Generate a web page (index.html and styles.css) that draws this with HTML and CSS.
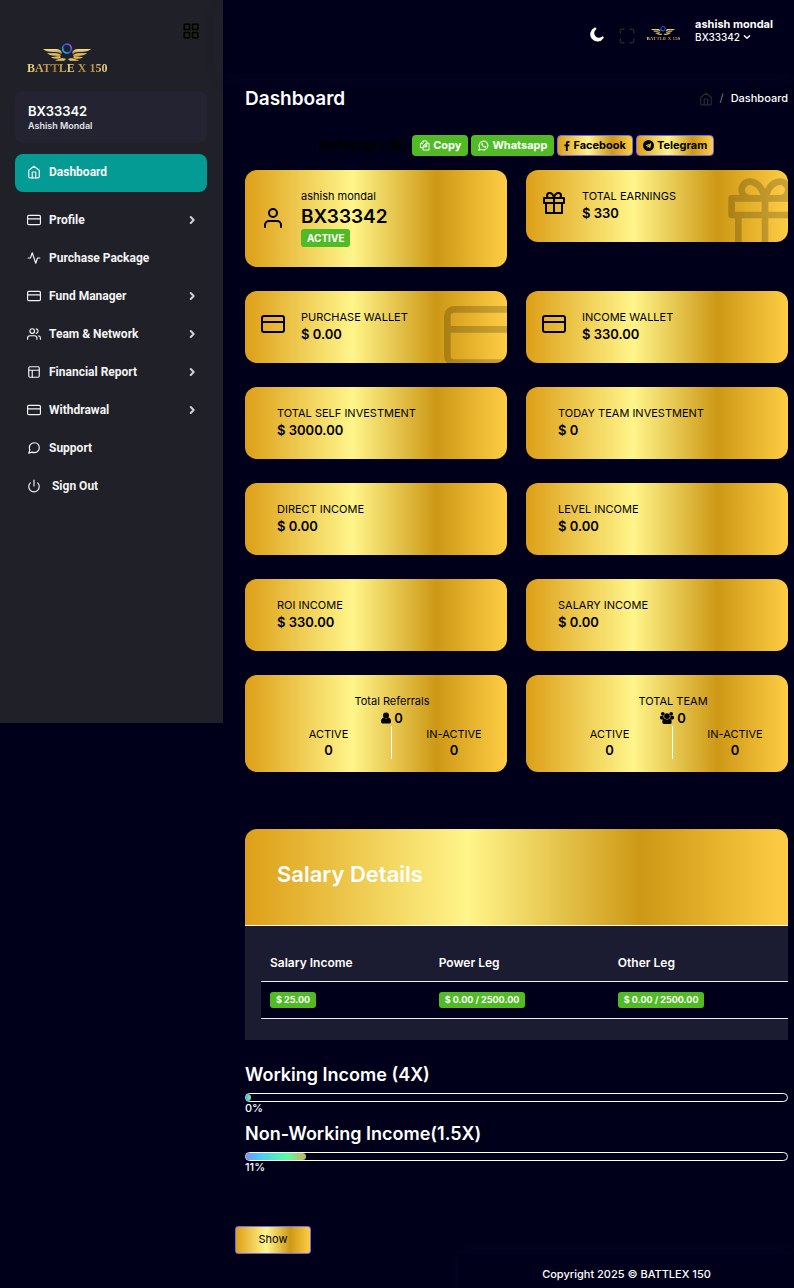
FILE: index.html
```html
<!DOCTYPE html>
<html lang="en">
<head>
<meta charset="utf-8">
<meta name="viewport" content="width=device-width, initial-scale=1">
<title>Dashboard - BATTLEX 150</title>
<link rel="stylesheet" href="styles.css">
</head>
<body>
<svg class="sprite" aria-hidden="true">
  <defs>
    <linearGradient id="wing" x1="0" x2="0" y1="0" y2="1">
      <stop offset="0" stop-color="#f8e69a"/><stop offset="1" stop-color="#b07a10"/>
    </linearGradient>
    <linearGradient id="ring" x1="0" x2="1" y1="1" y2="0">
      <stop offset="0" stop-color="#17c9f5"/><stop offset=".55" stop-color="#1450e0"/><stop offset="1" stop-color="#c850e8"/>
    </linearGradient>
  </defs>
  <symbol id="logo" viewBox="15 0 48 18">
    <g fill="url(#wing)">
      <path d="M15 6h13c3 0 5 1 6 4l-1 1c-2-2-5-2-8-2-5 0-8-1-10-3z"/>
      <path d="M19 10c5 1 9-1 14 2l-1 2c-4-2-9 0-13-4z"/>
      <path d="M23 14c4 0 7-1 10 0l-2 2c-3 0-6 0-8-2z"/>
      <path d="M27 17c4 0 6-3 11-1-2 3-8 4-11 1z"/>
      <path d="M63 6H50c-3 0-5 1-6 4l1 1c2-2 5-2 8-2 5 0 8-1 10-3z"/>
      <path d="M59 10c-5 1-9-1-14 2l1 2c4-2 9 0 13-4z"/>
      <path d="M55 14c-4 0-7-1-10 0l2 2c3 0 6 0 8-2z"/>
      <path d="M51 17c-4 0-6-3-11-1 2 3 8 4 11 1z"/>
    </g>
    <circle cx="39" cy="5.500" r="4.300" fill="none" stroke="url(#ring)" stroke-width="1.800"/>
  </symbol>
  <symbol id="i-grid" viewBox="0 0 24 24"><path d="M3 3h7v7H3zM14 3h7v7h-7zM14 14h7v7h-7zM3 14h7v7H3z"/></symbol>
  <symbol id="i-home" viewBox="0 0 24 24"><path d="M3 9l9-7 9 7v11a2 2 0 0 1-2 2H5a2 2 0 0 1-2-2z"/><path d="M9 22V12h6v10"/></symbol>
  <symbol id="i-card" viewBox="0 0 24 24"><rect x="1" y="4" width="22" height="16" rx="2"/><path d="M1 10h22"/></symbol>
  <symbol id="i-activity" viewBox="0 0 24 24"><path d="M22 12h-4l-3 9L9 3l-3 9H2"/></symbol>
  <symbol id="i-users" viewBox="0 0 24 24"><path d="M17 21v-2a4 4 0 0 0-4-4H5a4 4 0 0 0-4 4v2"/><circle cx="9" cy="7" r="4"/><path d="M23 21v-2a4 4 0 0 0-3-3.87M16 3.13a4 4 0 0 1 0 7.75"/></symbol>
  <symbol id="i-layout" viewBox="0 0 24 24"><rect x="3" y="3" width="18" height="18" rx="2"/><path d="M3 9h18M9 21V9"/></symbol>
  <symbol id="i-message" viewBox="0 0 24 24"><path d="M21 11.5a8.38 8.38 0 0 1-.9 3.8 8.5 8.5 0 0 1-7.6 4.7 8.38 8.38 0 0 1-3.8-.9L3 21l1.900-5.700a8.380 8.380 0 0 1-.900-3.800 8.500 8.500 0 0 1 4.700-7.600 8.380 8.380 0 0 1 3.800-.900h.500a8.480 8.480 0 0 1 8 8z"/></symbol>
  <symbol id="i-power" viewBox="0 0 24 24"><path d="M18.36 6.64a9 9 0 1 1-12.73 0M12 2v10"/></symbol>
  <symbol id="i-chevron" viewBox="0 0 24 24"><path d="M9 5l7 7-7 7"/></symbol>
  <symbol id="i-down" viewBox="0 0 24 24"><path d="M4 8l8 8 8-8"/></symbol>
  <symbol id="i-max" viewBox="0 0 24 24"><path d="M8 3H5a2 2 0 0 0-2 2v3m18 0V5a2 2 0 0 0-2-2h-3m0 18h3a2 2 0 0 0 2-2v-3M3 16v3a2 2 0 0 0 2 2h3"/></symbol>
  <symbol id="i-user" viewBox="0 0 24 24"><path d="M20 21v-2a4 4 0 0 0-4-4H8a4 4 0 0 0-4 4v2"/><circle cx="12" cy="7" r="4"/></symbol>
  <symbol id="i-gift" viewBox="0 0 24 24"><path d="M20 12v10H4V12M2 7h20v5H2zM12 22V7M12 7H7.500a2.500 2.500 0 0 1 0-5C11 2 12 7 12 7zM12 7h4.500a2.500 2.500 0 0 0 0-5C13 2 12 7 12 7z"/></symbol>
  <symbol id="f-moon" viewBox="0 0 14 14"><path d="M6.300 1.400A5.300 5.300 0 1 0 12.700 9.200 A5 5 0 0 1 6.300 1.400z" fill="none" stroke="currentColor" stroke-width="2" stroke-linejoin="round"/></symbol>
  <symbol id="f-copy" viewBox="0 0 24 24"><path d="M9 6.500V2h8v13h-6M9 2L3 8v9h6M3 8h6M15 7h7v15H9v-9l6-6v6H9" fill="none" stroke="currentColor" stroke-width="2"/></symbol>
  <symbol id="f-whatsapp" viewBox="0 0 24 24"><path d="M2 22l1.500-5.200A9.700 9.700 0 1 1 7.200 20.500z" fill="none" stroke="currentColor" stroke-width="2.200"/><path d="M8.500 6.500c-1.500 1-1.500 3 .2 5.500 2 3 4.800 4.800 7 4.800 1.500 0 2.500-1.200 2.300-2.500l-2.700-1.400-1.300 1.500c-1.600-.6-2.900-1.900-3.700-3.300l1-1.400-1.200-3z"/></symbol>
  <symbol id="f-facebook" viewBox="0 0 14 24"><path d="M13 .2v3.800h-2.200C9 4 8.700 4.800 8.700 6v2.600h4.200l-.6 4.200H8.700V24H4.300V12.800H.6V8.600h3.700V5.500C4.300 1.900 6.500 0 9.800 0c1.500 0 2.800.1 3.200.2z"/></symbol>
  <symbol id="f-telegram" viewBox="0 0 24 24"><path fill-rule="evenodd" d="M12 0a12 12 0 1 0 0 24 12 12 0 0 0 0-24zm5.900 7.300l-2 9.500c-.1.700-.5.900-1.100.5l-3-2.300-1.500 1.500c-.4.400-.7.200-.8-.4L9 13.200l-3-.9c-.7-.2-.7-.6.100-.9l11-4.300c.6-.2 1 .1.800.200zM9.700 12.800l.2 1.600 5-4.900z"/></symbol>
  <symbol id="f-user" viewBox="0 0 20 24"><circle cx="10" cy="7" r="6"/><path d="M5 11C1 12 0 16 0 19c0 3 2 4 4 4h12c2 0 4-1 4-4 0-3-1-7-5-8-3 3-7 3-10 0z"/></symbol>
  <symbol id="f-users" viewBox="0 0 30 26"><circle cx="6" cy="4" r="4"/><circle cx="24" cy="4" r="4"/><circle cx="15" cy="9" r="6"/><path d="M2 8C0 9 0 11 0 13c0 2 1 3 3 3h4c1-1 1-1 2-2-2-2-2-4-1-6-2 1-4 1-6 0zM28 8c2 1 2 3 2 5 0 2-1 3-3 3h-4c-1-1-1-1-2-2 2-2 2-4 1-6 2 1 4 1 6 0zM10 14c-4 0-5 4-5 7 0 3 1 5 4 5h12c3 0 4-2 4-5 0-3-1-7-5-7-3 3-7 3-10 0z"/></symbol>
</svg>

<div class="page">
  <aside class="sidebar">
    <div class="toggle-row"><button class="icon-button" type="button" aria-label="Toggle sidebar"><svg class="line icon-18"><use href="#i-grid"/></svg></button></div>
    <a class="brand" href="#"><svg class="wings"><use href="#logo"/></svg><span>BATTLE X 150</span></a>
    <div class="member"><strong>BX33342</strong><span>Ashish Mondal</span></div>
    <nav>
      <ul class="menu">
        <li><a class="active" href="#"><svg class="line icon-14"><use href="#i-home"/></svg>Dashboard</a></li>
        <li><a href="#"><svg class="line icon-14"><use href="#i-card"/></svg>Profile<svg class="line arrow"><use href="#i-chevron"/></svg></a></li>
        <li><a href="#"><svg class="line icon-14"><use href="#i-activity"/></svg>Purchase Package</a></li>
        <li><a href="#"><svg class="line icon-14"><use href="#i-card"/></svg>Fund Manager<svg class="line arrow"><use href="#i-chevron"/></svg></a></li>
        <li><a href="#"><svg class="line icon-14"><use href="#i-users"/></svg>Team &amp; Network<svg class="line arrow"><use href="#i-chevron"/></svg></a></li>
        <li><a href="#"><svg class="line icon-14"><use href="#i-layout"/></svg>Financial Report<svg class="line arrow"><use href="#i-chevron"/></svg></a></li>
        <li><a href="#"><svg class="line icon-14"><use href="#i-card"/></svg>Withdrawal<svg class="line arrow"><use href="#i-chevron"/></svg></a></li>
        <li><a href="#"><svg class="line icon-14"><use href="#i-message"/></svg>Support</a></li>
        <li><a href="#"><svg class="line icon-14"><use href="#i-power"/></svg>&nbsp;Sign Out</a></li>
      </ul>
    </nav>
  </aside>

  <div class="main">
    <header class="topbar">
      <button class="icon-button light" type="button" aria-label="Dark mode"><svg class="icon-16"><use href="#f-moon"/></svg></button>
      <button class="icon-button faint" type="button" aria-label="Full screen"><svg class="line icon-18"><use href="#i-max"/></svg></button>
      <div class="brand small"><svg class="wings"><use href="#logo"/></svg><span>BATTLE X 150</span></div>
      <a class="account" href="#"><strong>ashish mondal</strong><span>BX33342 <svg class="line icon-8"><use href="#i-down"/></svg></span></a>
    </header>

    <main class="content">
      <div class="title-row">
        <h1>Dashboard</h1>
        <nav class="crumbs" aria-label="Breadcrumb"><a href="#" aria-label="Home"><svg class="line icon-14"><use href="#i-home"/></svg></a><span class="slash">/</span><span>Dashboard</span></nav>
      </div>

      <div class="share">
        <span class="share-label">Referral URL</span>
        <button class="chip green" type="button"><svg class="icon-11"><use href="#f-copy"/></svg>Copy</button>
        <a class="chip green" href="#"><svg class="icon-11"><use href="#f-whatsapp"/></svg>Whatsapp</a>
        <a class="chip gold" href="#"><svg class="icon-fb"><use href="#f-facebook"/></svg>Facebook</a>
        <a class="chip gold" href="#"><svg class="icon-11"><use href="#f-telegram"/></svg>Telegram</a>
      </div>

      <section class="cards">
        <article class="card with-icon"><svg class="line icon-24 centered"><use href="#i-user"/></svg><div><p>ashish mondal</p><h2>BX33342</h2><span class="badge active-badge">ACTIVE</span></div></article>
        <article class="card with-icon"><svg class="line icon-24"><use href="#i-gift"/></svg><div><p>TOTAL EARNINGS</p><b>$ 330</b></div><svg class="line ghost"><use href="#i-gift"/></svg></article>
        <article class="card with-icon"><svg class="line icon-24"><use href="#i-card"/></svg><div><p>PURCHASE WALLET</p><b>$ 0.00</b></div><svg class="line ghost"><use href="#i-card"/></svg></article>
        <article class="card with-icon"><svg class="line icon-24"><use href="#i-card"/></svg><div><p>INCOME WALLET</p><b>$ 330.00</b></div></article>
        <article class="card"><p>TOTAL SELF INVESTMENT</p><b>$ 3000.00</b></article>
        <article class="card"><p>TODAY TEAM INVESTMENT</p><b>$ 0</b></article>
        <article class="card"><p>DIRECT INCOME</p><b>$ 0.00</b></article>
        <article class="card"><p>LEVEL INCOME</p><b>$ 0.00</b></article>
        <article class="card"><p>ROI INCOME</p><b>$ 330.00</b></article>
        <article class="card"><p>SALARY INCOME</p><b>$ 0.00</b></article>
        <article class="card tally"><p class="tally-title">Total Referrals</p><b><svg class="icon-user"><use href="#f-user"/></svg>0</b><div class="halves"><div><p>ACTIVE</p><b>0</b></div><div><p>IN-ACTIVE</p><b>0</b></div></div></article>
        <article class="card tally"><p class="tally-title">TOTAL TEAM</p><b><svg class="icon-14"><use href="#f-users"/></svg>0</b><div class="halves"><div><p>ACTIVE</p><b>0</b></div><div><p>IN-ACTIVE</p><b>0</b></div></div></article>
      </section>

      <section class="salary">
        <h2>Salary Details</h2>
        <div class="salary-body">
          <table>
            <thead><tr><th scope="col">Salary Income</th><th scope="col">Power Leg</th><th scope="col">Other Leg</th></tr></thead>
            <tbody><tr><td><span class="badge">$ 25.00</span></td><td><span class="badge">$ 0.00 / 2500.00</span></td><td><span class="badge">$ 0.00 / 2500.00</span></td></tr></tbody>
          </table>
        </div>
      </section>

      <section class="limits">
        <h3>Working Income (4X)</h3>
        <div class="bar"><div class="fill" style="width:1%"></div></div>
        <p>0%</p>
        <h3>Non-Working Income(1.5X)</h3>
        <div class="bar"><div class="fill" style="width:11%"></div></div>
        <p>11%</p>
      </section>

      <button class="show" type="button">Show</button>
    </main>
    <footer class="footer">Copyright 2025 © BATTLEX 150</footer>
  </div>
</div>
</body>
</html>
```

FILE: styles.css
```css
:root {
  --gold: linear-gradient(to right, #dd9f17 0%, #fff58a 41%, #cd9815 73%, #ffcd45 100%);
  --green: #51bb25;
  --night: #00001a;
}
* { box-sizing: border-box; }
body { margin: 0; background: var(--night); color: #fff; font: 11px/17px Inter, "Liberation Sans", sans-serif; }
h1, h2, h3, p, ul { margin: 0; padding: 0; }
a { color: inherit; text-decoration: none; }
button { font: inherit; color: inherit; }
svg { display: block; flex: none; fill: currentColor; }
.sprite { position: absolute; width: 0; height: 0; }
.line { fill: none; stroke: currentColor; stroke-width: 2; stroke-linecap: round; stroke-linejoin: round; }
.icon-8 { width: 8px; height: 8px; stroke-width: 4; }
.icon-fb { width: 6px; height: 10px; }
.icon-user { width: 10px; height: 12px; }
.icon-11 { width: 11px; height: 11px; }
.icon-14 { width: 14px; height: 14px; }
.icon-16 { width: 16px; height: 16px; }
.icon-18 { width: 18px; height: 18px; }
.icon-24 { width: 24px; height: 24px; }
.icon-button { padding: 0; border: 0; background: none; color: #000; }
.icon-button.light { color: #fff; }
.icon-button.faint { color: #20242a; }

.page { display: grid; grid-template-columns: 223px minmax(0, 1fr); align-items: start; }

.sidebar { padding: 22px 16px 217px 15px; background: #1f2028; font-family: Roboto, "Liberation Sans", sans-serif; }
.toggle-row { display: flex; justify-content: flex-end; padding-right: 7px; }
.brand { display: flex; flex-direction: column; align-items: center; width: fit-content; margin: 3px 0 16px 12px; }
.brand span { color: transparent; background: linear-gradient(to right, #f5e08a, #a87a35 35%, #efd57c 55%, #a87a35 75%, #f5e08a); background-clip: text; font: bold 12px/14px "Liberation Serif", serif; }
.wings { width: 48px; height: 18px; }
.brand.small { margin: 0; }
.brand.small .wings { width: 24px; height: 9px; }
.brand.small span { font-size: 5px; line-height: 7px; }
.member { display: flex; flex-direction: column; height: 52px; padding: 12px 13px; border-radius: 8px; background: #242332; }
.member strong { font: 600 13px/16px Inter, sans-serif; }
.member span { font: 600 9px/14px Inter, sans-serif; color: #e3e3e8; }
.menu { list-style: none; margin-top: 11px; }
.menu a { display: flex; align-items: center; gap: 8px; height: 38px; padding: 0 10px 2px 12px; border-radius: 8px; color: #f4f4f4; font-size: 12px; font-weight: 700; }
.menu a.active { margin-bottom: 10px; background: #049b94; }
.arrow { width: 10px; height: 10px; margin-left: auto; stroke-width: 5; color: #d0d0d4; }

.topbar { display: flex; align-items: center; justify-content: flex-end; height: 74px; padding: 0 21px 6px 20px; box-shadow: 0 4px 20px rgba(60, 60, 140, .08); }
.topbar .light { margin: 2px 14px 0 0; }
.topbar .faint { margin: 4px 10px 0 0; }
.account { display: flex; flex-direction: column; margin: -8px 0 0 14px; }
.account strong { font: 700 11px/14px Inter, sans-serif; }
.account span { display: flex; align-items: center; gap: 3px; font-size: 10px; line-height: 13px; font-weight: 500; }
.brand.small { padding: 0 1px; }

.content { padding: 12px 6px 0 22px; }
.title-row { display: flex; align-items: center; justify-content: space-between; height: 25px; }
h1 { font-size: 19px; line-height: 25px; font-weight: 600; }
.crumbs { display: flex; align-items: center; gap: 7px; font-size: 11px; font-weight: 500; }
.crumbs a { color: #262b33; }
.crumbs .slash { color: #6a6f78; }
.share { display: flex; justify-content: center; align-items: center; gap: 3px; margin: 24px 0 14px; }
.share-label { color: #000; font-size: 15px; font-weight: 600; }
.chip { display: flex; align-items: center; gap: 3px; height: 21px; padding: 0 7px; border: 0; border-radius: 4px; font-size: 11px; font-weight: 700; line-height: 19px; }
.green { background: var(--green); }
.gold, .show { color: #000; border: 1px solid #7366ff; background: var(--gold); }
.gold { padding: 0 6px; }

.cards { display: grid; grid-template-columns: 1fr 1fr; gap: 24px 19px; align-items: start; }
.card { position: relative; overflow: hidden; padding: 18px 0 20px 32px; border-radius: 12px; background: var(--gold); color: #000; }
.card b { display: block; font-size: 13px; font-weight: 600; }
.card h2 { font-size: 19px; line-height: 24px; font-weight: 600; }
.with-icon { display: flex; align-items: flex-start; gap: 16px; padding-left: 16px; }
.with-icon .icon-24 { margin-top: 3px; }
.with-icon .centered { margin: 0; align-self: center; }
.badge { display: inline-block; padding: 0 6px; border-radius: 3px; background: var(--green); color: #fff; font-size: 9px; line-height: 16px; font-weight: 700; }
.active-badge { display: block; width: fit-content; font-size: 10px; line-height: 18px; }
.ghost { position: absolute; right: -17px; bottom: -13px; width: 80px; height: 80px; opacity: .2; }
.tally { padding-bottom: 13px; text-align: center; line-height: 16px; }
.tally-title, .halves b { line-height: 17px; }
.tally > b { display: flex; align-items: center; justify-content: center; gap: 3px; }
.halves { display: grid; grid-template-columns: 1fr 1fr; margin: 0 -9px 0 -11px; }
.halves > div + div { border-left: 1px solid #fff; }

.salary { margin-top: 57px; border-radius: 12px 12px 0 0; overflow: hidden; background: #1b1b31; }
.salary h2 { padding: 30px 32px 36px; border-bottom: 1px solid #fff; background: var(--gold); font-size: 22px; line-height: 30px; font-weight: 600; }
.salary-body { padding: 16px 0 21px 16px; }
table { width: 100%; border-collapse: collapse; table-layout: fixed; }
th, td { padding: 0 9px; text-align: left; border-bottom: 1px solid #eee; }
th { height: 39px; padding-top: 2px; font-size: 12px; font-weight: 600; }
th:first-child { width: 32%; }
td { height: 37px; background: var(--night); }
td .badge { display: block; width: fit-content; }

.limits { margin-top: 23px; }
.limits h3 { font-size: 18px; line-height: 24px; font-weight: 600; }
.bar { height: 9px; margin-top: 6px; border: 1px solid #fff; border-radius: 5px; overflow: hidden; }
.fill { height: 100%; border-radius: 0 4px 4px 0; background: linear-gradient(to right, #7b95ff, #4cc3ff 20%, #55ff9c 68%, #c9b15c); }
.limits p { font-weight: 500; line-height: 13px; margin-bottom: 7px; }
.show { display: block; width: 76px; height: 28px; margin: 52px 0 0 -10px; border-radius: 3px; }
.footer { margin: 0 0 0 236px; padding: 12px 0 5px; text-align: center; font-weight: 500; box-shadow: 0 0 20px rgba(60, 60, 140, .12); }
```
